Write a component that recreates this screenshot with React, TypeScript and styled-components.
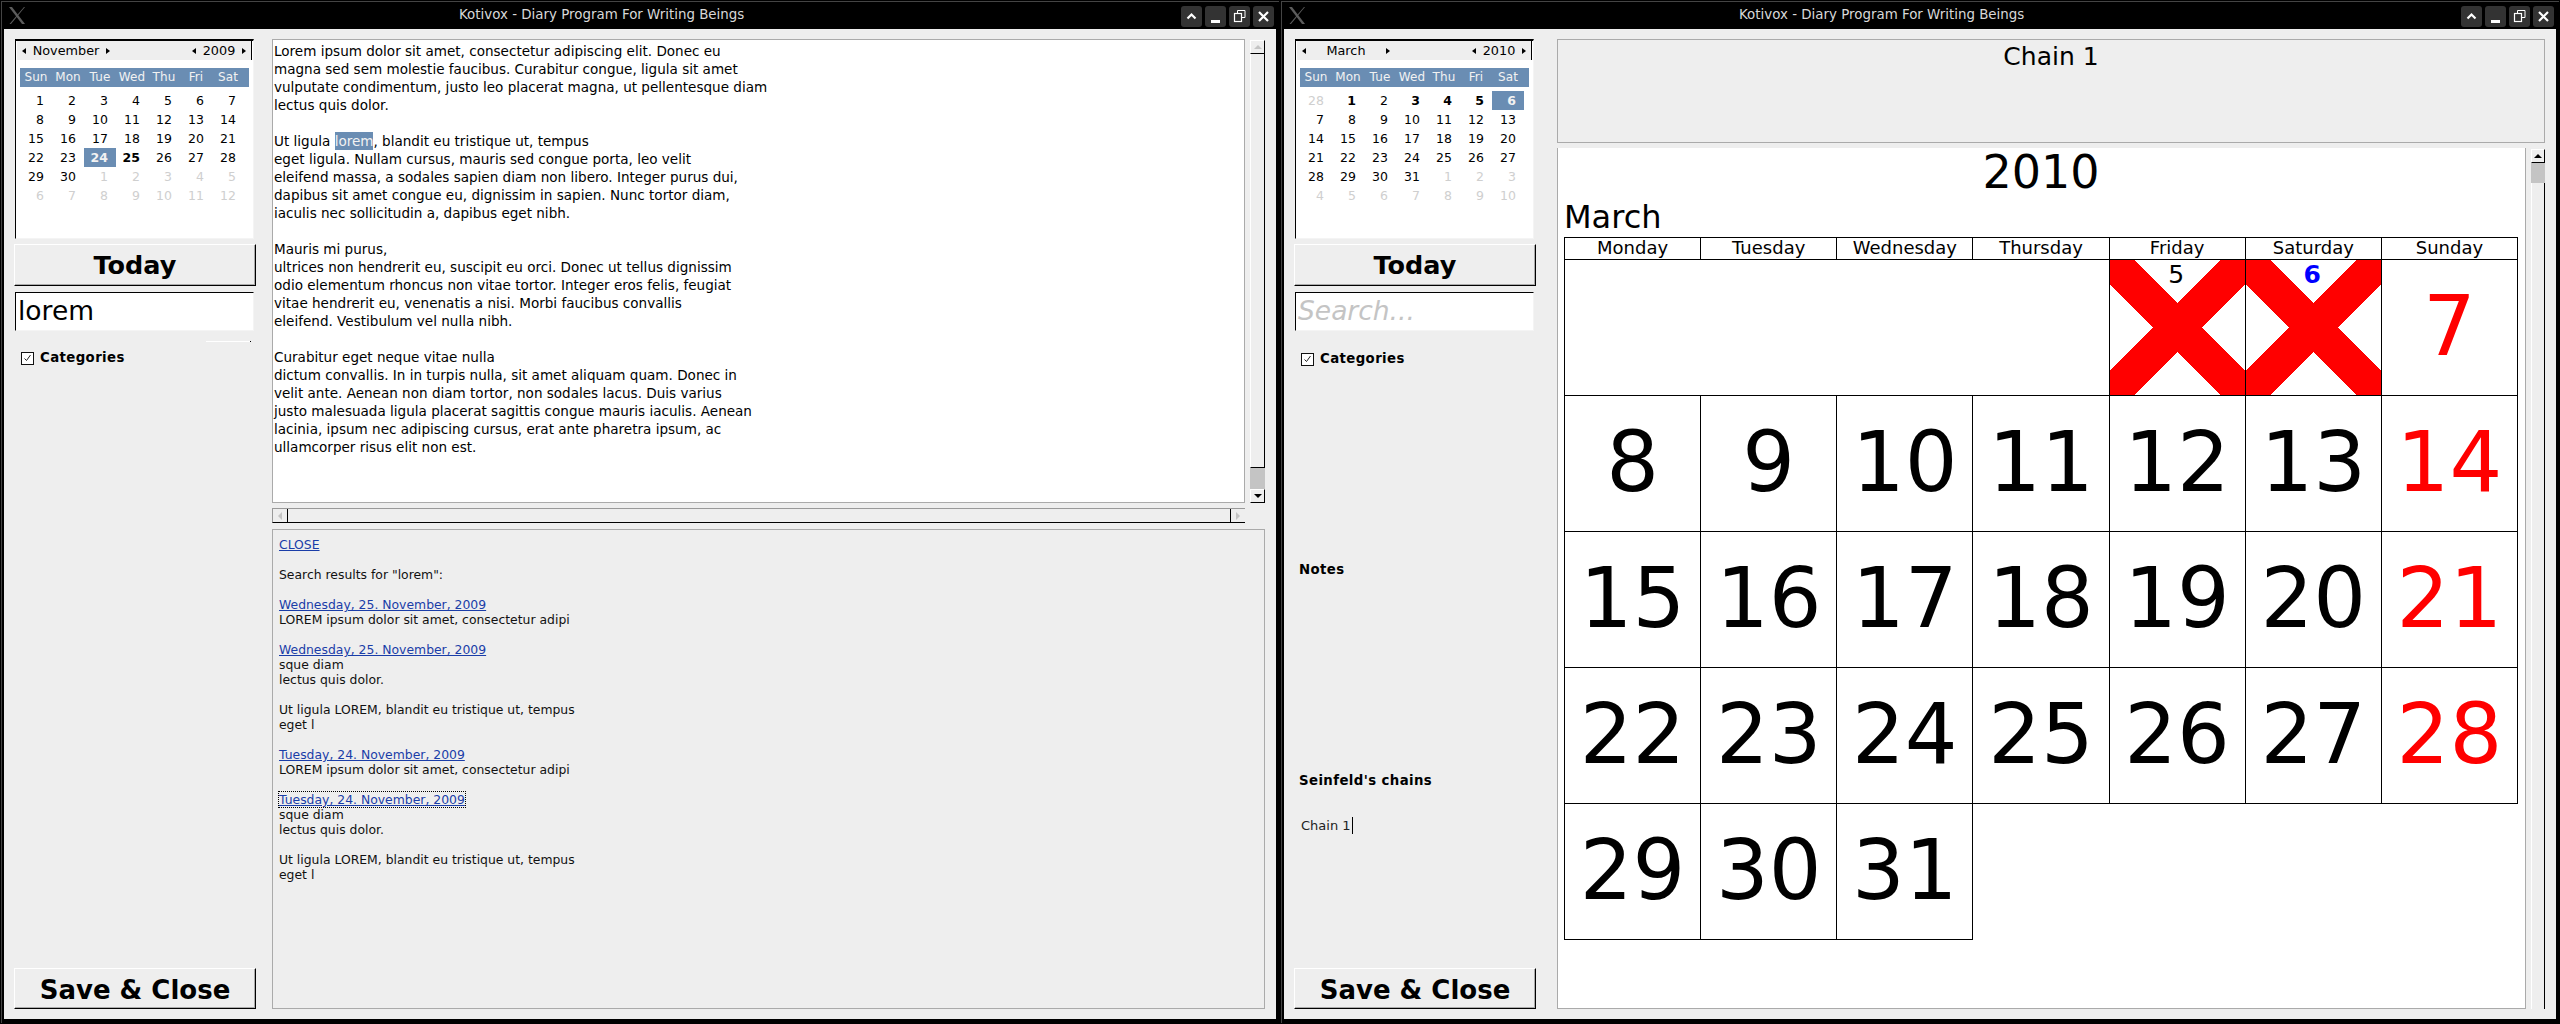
import React from 'react';
import styled, { createGlobalStyle } from 'styled-components';

const Global = createGlobalStyle`
  html, body { margin: 0; padding: 0; background: #000; }
  body { font-family: "DejaVu Sans", sans-serif; font-size: 13px; color: #000; }
  * { box-sizing: border-box; }
`;

const Desktop = styled.div`
  display: flex;
  width: 2560px;
  height: 1024px;
  overflow: hidden;
`;
const Frame = styled.section`
  width: 1280px;
  height: 1024px;
  background: #000;
  padding: 1px 1px 1px 1px;
`;
const FrameInner = styled.div`
  height: 100%;
  border-top: 1px solid #444;
  border-left: 1px solid #444;
  padding: 0 3px 4px 2px;
  display: flex;
  flex-direction: column;
`;
const TitleBar = styled.header`
  height: 27px;
  flex: none;
  display: flex;
  align-items: center;
  position: relative;
  color: #d8d8d8;
  font-size: 13.4px;
`;
const Logo = styled.svg`
  width: 16px;
  height: 17px;
  margin-left: 5px;
`;
const TitleText = styled.div`
  position: absolute;
  left: 455px;
  top: 6px;
  line-height: 14px;
  white-space: nowrap;
`;
const TitleButtons = styled.div`
  margin-left: auto;
  margin-right: 2px;
  margin-top: 1px;
  display: flex;
  gap: 3px;
`;
const TitleButton = styled.div`
  width: 21px;
  height: 21px;
  background: #333;
  border-radius: 3px;
  display: flex;
  align-items: center;
  justify-content: center;
`;
const Client = styled.div`
  flex: 1;
  min-height: 0;
  background: #eee;
  display: grid;
  grid-template-columns: 242px 1fr;
  column-gap: 16px;
  padding: 10px 11px 10px 10px;
`;
const Sidebar = styled.aside`
  display: flex;
  flex-direction: column;
  min-height: 0;
  position: relative;
`;
const CalBox = styled.div`
  width: 239px;
  height: 200px;
  margin-left: 1px;
  background: #fff;
  border-top: 2px solid #000;
  border-left: 1px solid #000;
  border-right: 1px solid #f4f4f4;
  border-bottom: 1px solid #f4f4f4;
`;
const CalNav = styled.div`
  height: 19px;
  background: #eee;
  margin-left: 1px;
  margin-right: 1px;
  border-right: 1px solid #000;
  display: flex;
  align-items: center;
  font-size: 12.8px;
`;
const NavArrow = styled.span<{ $dir: 'l' | 'r' }>`
  width: 0;
  height: 0;
  flex: none;
  border-top: 3.5px solid transparent;
  border-bottom: 3.5px solid transparent;
  ${(p) => (p.$dir === 'l' ? 'border-right: 4px solid #000;' : 'border-left: 4px solid #000;')}
`;
const NavMonth = styled.div`
  width: 88px;
  margin-left: 5px;
  text-align: center;
  display: flex;
  align-items: center;
`;
const NavLabel = styled.span`
  flex: 1;
  text-align: center;
`;
const NavYear = styled.div`
  margin-left: auto;
  width: 54px;
  margin-right: 5px;
  display: flex;
  align-items: center;
`;
const CalHead = styled.div`
  margin: 8px 4px 0 4px;
  height: 19px;
  background: #6a8db3;
  color: #f2f2f2;
  display: grid;
  grid-template-columns: repeat(7, 32px);
  font-size: 12px;
  letter-spacing: 0.1px;
  line-height: 19px;
  text-align: center;
`;
const CalGrid = styled.div`
  margin: 4px 0 0 4px;
  display: grid;
  grid-template-columns: repeat(7, 32px);
  grid-auto-rows: 19px;
  font-size: 12.5px;
  line-height: 19px;
`;
const CalDay = styled.div<{ $muted?: boolean; $bold?: boolean; $sel?: boolean }>`
  text-align: right;
  padding-right: 8px;
  color: ${(p) => (p.$sel ? '#f2f2f2' : p.$muted ? '#cfcfcf' : '#000')};
  background: ${(p) => (p.$sel ? '#6a8db3' : 'transparent')};
  font-weight: ${(p) => (p.$bold || p.$sel ? 700 : 400)};
`;
const BigButton = styled.div`
  width: 242px;
  height: 42px;
  background: #eee;
  border-top: 1px solid #fff;
  border-left: 1px solid #fff;
  border-right: 1px solid #000;
  border-bottom: 1px solid #000;
  box-shadow: inset -1px -1px 0 #aaa;
  font-weight: 700;
  font-size: 25.5px;
  line-height: 40px;
  text-align: center;
`;
const TodayButton = styled(BigButton)`
  margin-top: 5px;
`;
const SaveButton = styled(BigButton)`
  margin-top: auto;
  height: 41px;
  font-size: 26px;
  line-height: 42px;
`;
const SearchEntry = styled.div<{ $empty?: boolean }>`
  width: 239px;
  height: 39px;
  margin: 6px 0 0 1px;
  background: #fff;
  border-top: 1px solid #000;
  border-left: 1px solid #000;
  border-right: 1px solid #f4f4f4;
  border-bottom: 1px solid #f4f4f4;
  padding-left: 2px;
  font-size: 26.5px;
  line-height: 36px;
  color: ${(p) => (p.$empty ? '#c4c4c4' : '#000')};
  font-style: ${(p) => (p.$empty ? 'italic' : 'normal')};
`;
const DragLine = styled.div`
  position: absolute;
  left: 192px;
  top: 302px;
  width: 45px;
  height: 1px;
  background: #fff;
  border-right: 1px solid #000;
`;
const CategoriesRow = styled.div<{ $offset: number }>`
  display: flex;
  align-items: center;
  gap: 6px;
  margin: ${(p) => p.$offset}px 0 0 7px;
  height: 14px;
`;
const CheckBox = styled.svg`
  width: 13px;
  height: 13px;
  flex: none;
`;
const SectionLabel = styled.div<{ $top?: number }>`
  font-weight: 700;
  font-size: 13.3px;
  letter-spacing: 0.4px;
  line-height: 16px;
  margin-top: ${(p) => p.$top ?? 0}px;
`;
const NotesLabel = styled(SectionLabel)`
  margin-left: 5px;
`;
const ChainName = styled.div`
  margin: 28px 0 0 7px;
  font-size: 13px;
  line-height: 16px;
  color: #222;
  display: flex;
  align-items: center;
`;
const Caret = styled.span`
  display: inline-block;
  width: 1px;
  height: 17px;
  margin-left: 1px;
  background: #000;
`;
const Main = styled.main`
  display: grid;
  grid-template-rows: 484px 1fr;
  row-gap: 6px;
  min-height: 0;
  min-width: 0;
`;
const Editor = styled.div`
  display: grid;
  grid-template-columns: minmax(0, 1fr) 15px;
  grid-template-rows: minmax(0, 1fr) 15px;
  column-gap: 5px;
  row-gap: 5px;
  min-height: 0;
`;
const EditorText = styled.div`
  grid-column: 1;
  grid-row: 1;
  background: #fff;
  border: 1px solid #aaa;
  padding: 2px 0 0 1px;
  font-size: 13.55px;
  line-height: 18px;
  white-space: pre;
  overflow: hidden;
`;
const Selected = styled.span`
  display: inline-block;
  height: 18px;
  vertical-align: top;
  background: #6a8db3;
  color: #f2f2f2;
`;
const VScroll = styled.div`
  grid-column: 2;
  grid-row: 1;
  margin-top: 1px;
  display: flex;
  flex-direction: column;
  background: #c4c4c4;
`;
const ScrollArrow = styled.div`
  flex: none;
  height: 14px;
  background: #eee;
  border-top: 1px solid #fff;
  border-left: 1px solid #fff;
  border-right: 1px solid #000;
  border-bottom: 1px solid #000;
  display: flex;
  align-items: center;
  justify-content: center;
`;
const TriUp = styled.span<{ $dim?: boolean }>`
  border-left: 4px solid transparent;
  border-right: 4px solid transparent;
  border-bottom: 4px solid ${(p) => (p.$dim ? '#c4c4c4' : '#000')};
`;
const TriDown = styled.span`
  border-left: 4px solid transparent;
  border-right: 4px solid transparent;
  border-top: 4px solid #000;
`;
const TriSide = styled.span<{ $dir: 'l' | 'r' }>`
  border-top: 4px solid transparent;
  border-bottom: 4px solid transparent;
  ${(p) => (p.$dir === 'l' ? 'border-right: 4px solid #c4c4c4;' : 'border-left: 4px solid #c4c4c4;')}
`;
const VThumb = styled.div<{ $size: number }>`
  flex: none;
  height: ${(p) => p.$size}px;
  background: #eee;
  border-left: 1px solid #fff;
  border-right: 1px solid #000;
  border-bottom: 1px solid #000;
`;
const TroughFill = styled.div`
  flex: 1;
`;
const HScroll = styled.div`
  grid-column: 1;
  grid-row: 2;
  display: grid;
  grid-template-columns: 14px 1fr 14px;
  background: #eee;
  border-top: 1px solid #999;
  border-bottom: 1px solid #000;
  border-left: 1px solid #999;
`;
const HArrow = styled.div`
  display: flex;
  align-items: center;
  justify-content: center;
`;
const HThumb = styled.div`
  border-left: 1px solid #000;
  border-right: 1px solid #000;
`;
const Results = styled.div`
  border: 1px solid #aaa;
  padding: 7px 6px 0 6px;
  font-size: 12.4px;
  line-height: 15px;
  color: #111;
  overflow: hidden;
`;
const ResultLine = styled.div<{ $gap?: boolean }>`
  height: 15px;
  white-space: pre;
  margin-top: ${(p) => (p.$gap ? 15 : 0)}px;
`;
const ResultLink = styled.span<{ $focus?: boolean }>`
  color: #1a3da8;
  text-decoration: underline;
  ${(p) => (p.$focus ? 'outline: 1px dotted #000; outline-offset: 0;' : '')}
`;
const ChainMain = styled.main`
  display: grid;
  grid-template-rows: 104px 1fr;
  row-gap: 5px;
  min-height: 0;
  min-width: 0;
  margin-left: 5px;
`;
const ChainHeader = styled.div`
  border: 1px solid #aaa;
  font-size: 25px;
  line-height: 34px;
  text-align: center;
`;
const ChainBody = styled.div`
  display: grid;
  grid-template-columns: minmax(0, 1fr) 14px;
  column-gap: 5px;
  min-height: 0;
`;
const ChainCanvas = styled.div`
  background: #fff;
  border-left: 1px solid #aaa;
  border-right: 1px solid #aaa;
  border-bottom: 1px solid #aaa;
  padding: 0 7px 0 6px;
  overflow: hidden;
`;
const YearTitle = styled.div`
  font-size: 46px;
  line-height: 49px;
  text-align: center;
`;
const MonthTitle = styled.div`
  font-size: 32px;
  line-height: 40px;
`;
const Table = styled.div`
  width: 954px;
  display: grid;
  grid-template-columns: repeat(7, 136.15px);
  grid-template-rows: 22px repeat(5, 136px);
  border-left: 1px solid #000;
  border-top: 1px solid #000;
`;
const HeadCell = styled.div`
  border-right: 1px solid #000;
  border-bottom: 1px solid #000;
  font-size: 18px;
  line-height: 20px;
  text-align: center;
`;
const DayCell = styled.div<{ $red?: boolean }>`
  border-right: 1px solid #000;
  border-bottom: 1px solid #000;
  font-size: 83px;
  line-height: 133px;
  text-align: center;
  color: ${(p) => (p.$red ? '#f00' : '#000')};
`;
const EmptyCell = styled.div<{ $right?: boolean }>`
  border-bottom: 1px solid #000;
  ${(p) => (p.$right ? 'border-right: 1px solid #000;' : '')}
`;
const DoneCell = styled.div`
  position: relative;
  border-right: 1px solid #000;
  border-bottom: 1px solid #000;
  text-align: center;
  font-size: 25px;
  line-height: 30px;
`;
const Cross = styled.svg`
  position: absolute;
  inset: 0;
  width: 100%;
  height: 100%;
`;
const DoneNumber = styled.span<{ $today?: boolean }>`
  position: relative;
  right: 1px;
  color: ${(p) => (p.$today ? '#00f' : '#000')};
  font-weight: ${(p) => (p.$today ? 700 : 400)};
`;
const ChainScrollCol = styled.div`
  display: flex;
  flex-direction: column;
  background: #eee;
  margin-top: 1px;
`;
const ChainThumb = styled.div`
  flex: none;
  height: 20px;
  background: #c4c4c4;
`;
const ChainTrack = styled.div`
  flex: 1;
  border-right: 1px solid #000;
  border-left: 1px solid #fff;
`;

const Icon = { fill: 'none', stroke: '#fff', strokeWidth: 2 };

function Chrome() {
  return (
    <TitleBar>
      <Logo viewBox="0 0 16 17">
        <polygon points="0,0 3,0 16,17 13,17" fill="#5c5c5c" />
        <polygon points="15,0 16,0 2,17 0.5,17" fill="#5c5c5c" />
      </Logo>
      <TitleText>Kotivox - Diary Program For Writing Beings</TitleText>
      <TitleButtons>
        <TitleButton>
          <svg width="11" height="9" viewBox="0 0 11 9">
            <path d="M1.5 6.5 5.5 2.5 9.5 6.5" {...Icon} strokeWidth={2.2} />
          </svg>
        </TitleButton>
        <TitleButton>
          <svg width="11" height="13" viewBox="0 0 11 13">
            <rect x="1" y="10" width="9" height="3" fill="#fff" />
          </svg>
        </TitleButton>
        <TitleButton>
          <svg width="13" height="13" viewBox="0 0 13 13">
            <path d="M4.5 3V.5h7.5v7H9" {...Icon} strokeWidth={1} />
            <rect x="1.5" y="3.5" width="7" height="8" {...Icon} strokeWidth={1.2} />
          </svg>
        </TitleButton>
        <TitleButton>
          <svg width="11" height="11" viewBox="0 0 11 11">
            <path d="M1 1 10 10M10 1 1 10" {...Icon} strokeWidth={2.2} />
          </svg>
        </TitleButton>
      </TitleButtons>
    </TitleBar>
  );
}

type DayInfo = { n: number; muted?: boolean; bold?: boolean; sel?: boolean };
const WEEK = ['Sun', 'Mon', 'Tue', 'Wed', 'Thu', 'Fri', 'Sat'];

function monthDays(lead: number[], count: number, trail: number, bold: number[], sel: number): DayInfo[] {
  const out: DayInfo[] = lead.map((n) => ({ n, muted: true }));
  for (let i = 1; i <= count; i++) out.push({ n: i, bold: bold.includes(i), sel: i === sel });
  for (let i = 1; i <= trail; i++) out.push({ n: i, muted: true });
  return out;
}

function Calendar({ month, year, days }: { month: string; year: string; days: DayInfo[] }) {
  return (
    <CalBox>
      <CalNav>
        <NavMonth>
          <NavArrow $dir="l" />
          <NavLabel>{month}</NavLabel>
          <NavArrow $dir="r" />
        </NavMonth>
        <NavYear>
          <NavArrow $dir="l" />
          <NavLabel>{year}</NavLabel>
          <NavArrow $dir="r" />
        </NavYear>
      </CalNav>
      <CalHead>
        {WEEK.map((d) => (
          <span key={d}>{d}</span>
        ))}
      </CalHead>
      <CalGrid>
        {days.map((d, i) => (
          <CalDay key={i} $muted={d.muted} $bold={d.bold} $sel={d.sel}>
            {d.n}
          </CalDay>
        ))}
      </CalGrid>
    </CalBox>
  );
}

function Categories({ offset }: { offset: number }) {
  return (
    <CategoriesRow $offset={offset}>
      <CheckBox viewBox="0 0 13 13">
        <rect x="0.5" y="0.5" width="12" height="12" fill="#fff" stroke="#111" />
        <path d="M3.5 6.5 5.5 8.5 9.5 3" fill="none" stroke="#222" />
      </CheckBox>
      <SectionLabel>Categories</SectionLabel>
    </CategoriesRow>
  );
}

const BODY = `Lorem ipsum dolor sit amet, consectetur adipiscing elit. Donec eu
magna sed sem molestie faucibus. Curabitur congue, ligula sit amet
vulputate condimentum, justo leo placerat magna, ut pellentesque diam
lectus quis dolor.

Ut ligula `;
const BODY2 = `, blandit eu tristique ut, tempus
eget ligula. Nullam cursus, mauris sed congue porta, leo velit
eleifend massa, a sodales sapien diam non libero. Integer purus dui,
dapibus sit amet congue eu, dignissim in sapien. Nunc tortor diam,
iaculis nec sollicitudin a, dapibus eget nibh.

Mauris mi purus,
ultrices non hendrerit eu, suscipit eu orci. Donec ut tellus dignissim
odio elementum rhoncus non vitae tortor. Integer eros felis, feugiat
vitae hendrerit eu, venenatis a nisi. Morbi faucibus convallis
eleifend. Vestibulum vel nulla nibh.

Curabitur eget neque vitae nulla
dictum convallis. In in turpis nulla, sit amet aliquam quam. Donec in
velit ante. Aenean non diam tortor, non sodales lacus. Duis varius
justo malesuada ligula placerat sagittis congue mauris iaculis. Aenean
lacinia, ipsum nec adipiscing cursus, erat ante pharetra ipsum, ac
ullamcorper risus elit non est.`;

function DiaryWindow() {
  return (
    <Frame>
      <FrameInner>
        <Chrome />
        <Client>
          <Sidebar>
            <Calendar
              month="November"
              year="2009"
              days={monthDays([], 30, 12, [25], 24)}
            />
            <TodayButton>Today</TodayButton>
            <SearchEntry>lorem</SearchEntry>
            <DragLine />
            <Categories offset={20} />
            <SaveButton>Save &amp; Close</SaveButton>
          </Sidebar>
          <Main>
            <Editor>
              <EditorText>
                {BODY}
                <Selected>lorem</Selected>
                {BODY2}
              </EditorText>
              <VScroll>
                <ScrollArrow>
                  <TriUp $dim />
                </ScrollArrow>
                <VThumb $size={414} />
                <TroughFill />
                <ScrollArrow>
                  <TriDown />
                </ScrollArrow>
              </VScroll>
              <HScroll>
                <HArrow>
                  <TriSide $dir="l" />
                </HArrow>
                <HThumb />
                <HArrow>
                  <TriSide $dir="r" />
                </HArrow>
              </HScroll>
            </Editor>
            <Results>
              <ResultLine>
                <ResultLink>CLOSE</ResultLink>
              </ResultLine>
              <ResultLine $gap>Search results for "lorem":</ResultLine>
              <ResultLine $gap>
                <ResultLink>Wednesday, 25. November, 2009</ResultLink>
              </ResultLine>
              <ResultLine>LOREM ipsum dolor sit amet, consectetur adipi</ResultLine>
              <ResultLine $gap>
                <ResultLink>Wednesday, 25. November, 2009</ResultLink>
              </ResultLine>
              <ResultLine>sque diam</ResultLine>
              <ResultLine>lectus quis dolor.</ResultLine>
              <ResultLine $gap>Ut ligula LOREM, blandit eu tristique ut, tempus</ResultLine>
              <ResultLine>eget l</ResultLine>
              <ResultLine $gap>
                <ResultLink>Tuesday, 24. November, 2009</ResultLink>
              </ResultLine>
              <ResultLine>LOREM ipsum dolor sit amet, consectetur adipi</ResultLine>
              <ResultLine $gap>
                <ResultLink $focus>Tuesday, 24. November, 2009</ResultLink>
              </ResultLine>
              <ResultLine>sque diam</ResultLine>
              <ResultLine>lectus quis dolor.</ResultLine>
              <ResultLine $gap>Ut ligula LOREM, blandit eu tristique ut, tempus</ResultLine>
              <ResultLine>eget l</ResultLine>
            </Results>
          </Main>
        </Client>
      </FrameInner>
    </Frame>
  );
}

const HEADS = ['Monday', 'Tuesday', 'Wednesday', 'Thursday', 'Friday', 'Saturday', 'Sunday'];

function Done({ n, today }: { n: number; today?: boolean }) {
  return (
    <DoneCell>
      <Cross viewBox="0 0 135 135" shapeRendering="crispEdges">
        <path d="M0 0 135 135M135 0 0 135" stroke="#f00" strokeWidth={35} fill="none" />
      </Cross>
      <DoneNumber $today={today}>{n}</DoneNumber>
    </DoneCell>
  );
}

function ChainWindow() {
  const days: number[] = [];
  for (let i = 8; i <= 31; i++) days.push(i);
  return (
    <Frame>
      <FrameInner>
        <Chrome />
        <Client>
          <Sidebar>
            <Calendar
              month="March"
              year="2010"
              days={monthDays([28], 31, 10, [1, 3, 4, 5], 6)}
            />
            <TodayButton>Today</TodayButton>
            <SearchEntry $empty>Search...</SearchEntry>
            <Categories offset={21} />
            <NotesLabel $top={196}>Notes</NotesLabel>
            <NotesLabel $top={195}>Seinfeld's chains</NotesLabel>
            <ChainName>
              Chain 1
              <Caret />
            </ChainName>
            <SaveButton>Save &amp; Close</SaveButton>
          </Sidebar>
          <ChainMain>
            <ChainHeader>Chain 1</ChainHeader>
            <ChainBody>
              <ChainCanvas>
                <YearTitle>2010</YearTitle>
                <MonthTitle>March</MonthTitle>
                <Table>
                  {HEADS.map((h) => (
                    <HeadCell key={h}>{h}</HeadCell>
                  ))}
                  <EmptyCell />
                  <EmptyCell />
                  <EmptyCell />
                  <EmptyCell $right />
                  <Done n={5} />
                  <Done n={6} today />
                  <DayCell $red>7</DayCell>
                  {days.map((d) => (
                    <DayCell key={d} $red={(d - 7) % 7 === 0}>
                      {d}
                    </DayCell>
                  ))}
                </Table>
              </ChainCanvas>
              <ChainScrollCol>
                <ScrollArrow>
                  <TriUp />
                </ScrollArrow>
                <ChainThumb />
                <ChainTrack />
              </ChainScrollCol>
            </ChainBody>
          </ChainMain>
        </Client>
      </FrameInner>
    </Frame>
  );
}

export default function App() {
  return (
    <>
      <Global />
      <Desktop>
        <DiaryWindow />
        <ChainWindow />
      </Desktop>
    </>
  );
}
